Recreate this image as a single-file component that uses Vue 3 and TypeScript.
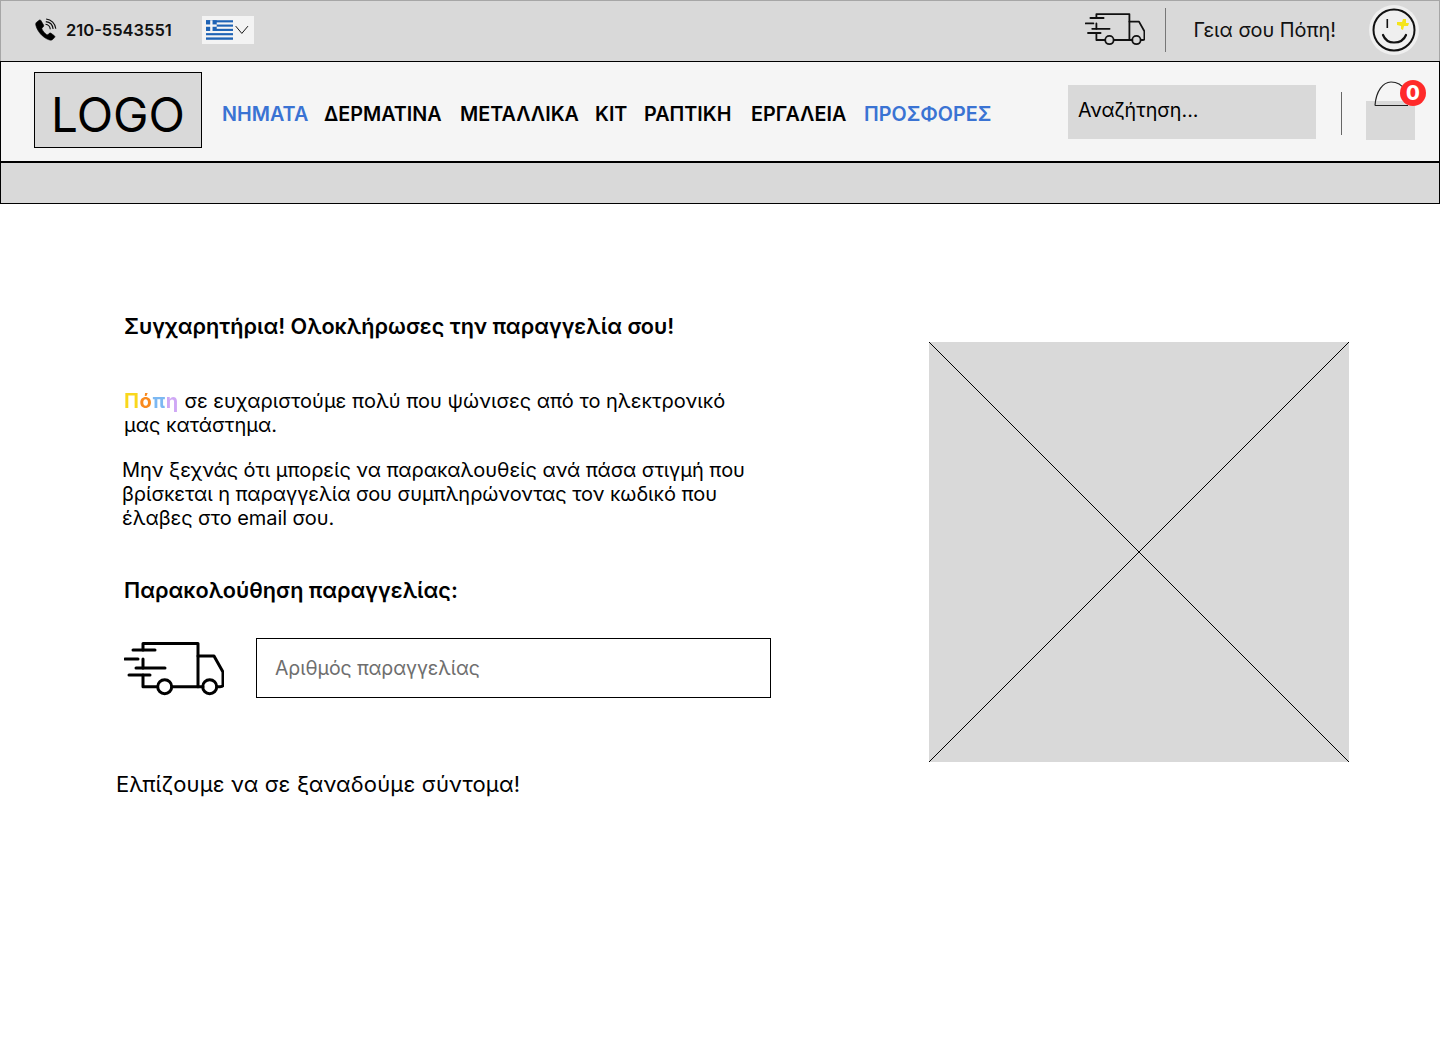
<script setup lang="ts">
const navItems: { label: string; accent?: boolean }[] = [
  { label: 'ΝΗΜΑΤΑ', accent: true },
  { label: 'ΔΕΡΜΑΤΙΝΑ' },
  { label: 'ΜΕΤΑΛΛΙΚΑ' },
  { label: 'ΚΙΤ' },
  { label: 'ΡΑΠΤΙΚΗ' },
  { label: 'ΕΡΓΑΛΕΙΑ' },
  { label: 'ΠΡΟΣΦΟΡΕΣ', accent: true },
]
</script>

<template>
  <div class="page">
    <header>
      <div class="topbar">
        <div class="phone">
          <svg class="phone-icon" width="24" height="24" viewBox="0 0 24 24" fill="none">
            <path d="M5.200 2.200 2.600 4.200C1.600 5 1.500 6.400 2 7.800 3.600 13.600 8.600 19.400 14.400 21.600c1.800.7 3.200.8 4.200-.1l1.900-1.900c.6-.6.5-1.300-.1-1.800l-3.400-2.600c-.6-.4-1.200-.4-1.700.1l-1.300 1.300c-.4.3-.8.3-1.200.1-2-1.300-3.800-3.500-4.900-5.700-.2-.4-.1-.8.2-1.100l1.200-1.100c.5-.5.6-1.100.3-1.700L6.900 2.500c-.4-.7-1.100-.8-1.700-.3Z" fill="#000" stroke="#000" stroke-width=".6"/>
            <path d="M11.500 6.300c2.500.3 4.500 2.300 4.800 4.900M11.800 3.600c4 .4 6.900 3.300 7.300 7.400M12.100 1c5.200.5 9.200 4.500 9.700 9.800" stroke="#0a0a0a" stroke-width="1.100"/>
          </svg>
          <span class="phone-number">210-5543551</span>
        </div>
        <div class="lang">
          <svg width="28" height="20" viewBox="0 0 28 20">
            <rect width="28" height="20" fill="#f5f5f5"/>
            <g fill="#1e63b5">
              <rect y="0" width="28" height="2.200"/>
              <rect x="10" y="4.400" width="18" height="2.200"/>
              <rect x="10" y="8.800" width="18" height="2.200"/>
              <rect y="13.200" width="28" height="2.200"/>
              <rect y="17.600" width="28" height="2.400"/>
              <rect width="11" height="11"/>
            </g>
            <rect x="4.300" width="2.400" height="11" fill="#f5f5f5"/>
            <rect y="4.300" width="11" height="2.400" fill="#f5f5f5"/>
          </svg>
          <svg width="14" height="10" viewBox="0 0 14 10" fill="none">
            <path d="M.7 1 7 8.500 13.300 1" stroke="#111" stroke-width="1"/>
          </svg>
        </div>
        <div class="spacer"></div>
        <svg class="truck-small" width="60" height="34" viewBox="0 0 100 56" fill="none">
          <g stroke="#111" stroke-width="3" stroke-linecap="round" stroke-linejoin="round">
            <path d="M19 8V1.500H74V44.700H48M19 17V26M19 33V44.700H33"/>
            <path d="M74 14H90L99 30V43C99 44.700 98 44.700 96 44.700H93M74 44.700H79"/>
            <path d="M9 8H31M1 17H14M12 26H41M5 33H26"/>
            <circle cx="40.700" cy="44.700" r="7"/>
            <circle cx="85.700" cy="44.700" r="7"/>
          </g>
        </svg>
        <div class="top-divider"></div>
        <span class="greeting">Γεια σου Πόπη!</span>
        <div class="avatar">
          <svg width="44" height="44" viewBox="0 0 44 44" fill="none">
            <circle cx="22" cy="22" r="20.500" stroke="#111" stroke-width="2"/>
            <path d="M15.300 11V20" stroke="#111" stroke-width="1.600"/>
            <path d="M11 27C13 32 17 34.500 22 34.500C28 34.500 32 32 34 27" stroke="#111" stroke-width="2.200" stroke-linecap="round"/>
            <path d="M25 14 30 14 31 11 34 11 34 15 37 15 36 18 32 18 31 22 29 21 29 18 25 17Z" fill="#f5e51b"/>
          </svg>
        </div>
      </div>

      <nav class="navbar">
        <div class="logo">LOGO</div>
        <ul class="nav-links">
          <li v-for="item in navItems" :key="item.label" :class="{ accent: item.accent }">{{ item.label }}</li>
        </ul>
        <div class="search">Αναζήτηση...</div>
        <div class="nav-divider"></div>
        <div class="cart">
          <svg class="cart-handle" width="42" height="26" viewBox="0 0 42 26" fill="none">
            <path d="M1 24.500C2 10 9 1 17 1C24 1 28 4 31 9M1 24.500H34" stroke="#222" stroke-width="1.200"/>
          </svg>
          <div class="cart-box"></div>
          <span class="cart-badge">0</span>
        </div>
      </nav>

      <div class="subbar"></div>
    </header>

    <main class="content">
      <section class="copy">
        <h1 class="heading first">Συγχαρητήρια! Ολοκλήρωσες την παραγγελία σου!</h1>
        <p class="thanks">
          <span class="name">Πόπη</span>
          σε ευχαριστούμε πολύ που ψώνισες από το ηλεκτρονικό μας κατάστημα.
        </p>
        <p class="reminder">
          Μην ξεχνάς ότι μπορείς να παρακαλουθείς ανά πάσα στιγμή που βρίσκεται η παραγγελία σου συμπληρώνοντας τον κωδικό που έλαβες στο email σου.
        </p>
        <h2 class="heading second">Παρακολούθηση παραγγελίας:</h2>
        <div class="tracking">
          <svg width="100" height="56" viewBox="0 0 100 56" fill="none">
            <g stroke="#000" stroke-width="3" stroke-linecap="round" stroke-linejoin="round">
              <path d="M19 8V1.500H74V44.700H48M19 17V26M19 33V44.700H33"/>
              <path d="M74 14H90L99 30V43C99 44.700 98 44.700 96 44.700H93M74 44.700H79"/>
              <path d="M9 8H31M1 17H14M12 26H41M5 33H26"/>
              <circle cx="40.700" cy="44.700" r="7"/>
              <circle cx="85.700" cy="44.700" r="7"/>
            </g>
          </svg>
          <input class="order-input" type="text" placeholder="Αριθμός παραγγελίας" />
        </div>
        <p class="farewell">Ελπίζουμε να σε ξαναδούμε σύντομα!</p>
      </section>
      <svg class="placeholder" width="420" height="420" viewBox="0 0 420 420">
        <rect width="420" height="420" fill="#d9d9d9"/>
        <path d="M0 0 420 420M420 0 0 420" stroke="#000" stroke-width="1"/>
      </svg>
    </main>
  </div>
</template>

<style>
body { margin: 0; background: #fff; }
</style>

<style scoped>
.page {
  width: 1440px;
  height: 1040px;
  overflow: hidden;
  font-family: Inter, "Noto Sans", sans-serif;
  color: #000;
  background: #fff;
}
.topbar {
  box-sizing: border-box;
  height: 61px;
  display: flex;
  align-items: center;
  padding: 0 20px 2px 33px;
  background: #d9d9d9;
  border: 1px solid #a6a6a6;
  border-bottom: none;
}
.phone { display: flex; align-items: center; gap: 8px; }
.phone-icon { display: block; }
.phone-number { font-size: 16.500px; font-weight: 600; color: #111; line-height: 20px; }
.lang {
  box-sizing: border-box;
  width: 52px;
  height: 28px;
  margin-left: 30px;
  padding: 4px 5px 4px 4px;
  display: flex;
  align-items: center;
  gap: 2px;
  background: #f3f3f3;
}
.spacer { flex: 1; }
.truck-small { display: block; margin-right: 20px; }
.top-divider { width: 1px; height: 44px; background: #777; }
.greeting { margin-left: 27px; font-size: 19.900px; color: #111; line-height: 24px; }
.avatar {
  box-sizing: border-box;
  width: 50px;
  height: 50px;
  margin-left: 33px;
  border-radius: 50%;
  background: #efefef;
  display: flex;
  align-items: center;
  justify-content: center;
}
.navbar {
  box-sizing: border-box;
  height: 102px;
  display: flex;
  align-items: center;
  padding: 0 0 0 33px;
  background: #f5f5f5;
  border: 1px solid #000;
  border-bottom-width: 2px;
}
.logo {
  box-sizing: border-box;
  width: 168px;
  height: 76px;
  margin-top: -3px;
  display: flex;
  align-items: center;
  justify-content: center;
  background: #d9d9d9;
  border: 1px solid #000;
  font-size: 47.600px;
  line-height: 58px;
  padding-top: 9px;
}
.nav-links {
  display: flex;
  list-style: none;
  margin: 4px 0 0 20px;
  padding: 0;
  width: 846px;
  font-size: 19.750px;
  font-weight: 600;
  line-height: 24px;
  white-space: nowrap;
}
.nav-links li:nth-child(1) { width: 102px; }
.nav-links li:nth-child(2) { width: 136px; }
.nav-links li:nth-child(3) { width: 135px; }
.nav-links li:nth-child(4) { width: 49px; }
.nav-links li:nth-child(5) { width: 107px; }
.nav-links li:nth-child(6) { width: 113px; }
.accent { color: #3a73d3; }
.search {
  box-sizing: border-box;
  width: 248px;
  height: 54px;
  padding: 13px 10px;
  background: #d9d9d9;
  font-size: 19.700px;
  line-height: 24px;
}
.nav-divider { width: 1px; height: 43px; margin-left: 25px; margin-top: 4px; background: #666; }
.cart {
  position: relative;
  width: 50px;
  height: 60px;
  margin-left: 24px;
  margin-top: -2px;
}
.cart-box {
  position: absolute;
  left: 0;
  bottom: 1px;
  width: 49px;
  height: 39px;
  background: #d9d9d9;
}
.cart-handle { position: absolute; left: 8px; top: 0; z-index: 1; }
.cart-badge {
  position: absolute;
  left: 34px;
  top: -1px;
  z-index: 2;
  width: 26px;
  height: 26px;
  border-radius: 50%;
  background: #ff2a2a;
  color: #fff;
  font-size: 20px;
  font-weight: 800;
  line-height: 26px;
  text-align: center;
}
.subbar {
  box-sizing: border-box;
  height: 41px;
  background: #d9d9d9;
  border: 1px solid #000;
  border-top: none;
}
.content {
  display: flex;
  align-items: flex-start;
  padding-left: 116px;
}
.copy { width: 813px; flex: none; }
.heading {
  margin: 0;
  padding-left: 8px;
  font-size: 21.650px;
  font-weight: 600;
  line-height: 27px;
  white-space: nowrap;
}
.first { margin-top: 109px; }
.second { margin-top: 47px; }
p { margin: 0; font-size: 20px; line-height: 24px; }
.thanks { width: 612px; margin: 49px 0 0 8px; }
.name {
  font-weight: 700;
  letter-spacing: .6px;
  color: transparent;
  background: linear-gradient(90deg, #f9d71c 0 26%, #f98a1e 26% 50%, #7cb8f2 50% 74%, #cfa8f5 74% 100%);
  -webkit-background-clip: text;
  background-clip: text;
}
.reminder { width: 630px; margin: 21px 0 0 6px; letter-spacing: -.06px; }
.tracking {
  display: flex;
  align-items: center;
  gap: 32px;
  margin: 34px 0 0 8px;
}
.tracking svg { display: block; margin-top: 4px; }
.order-input {
  box-sizing: border-box;
  width: 515px;
  height: 60px;
  padding: 0 18px;
  border: 1px solid #000;
  background: #fff;
  font: 19.500px/24px Inter, "Noto Sans", sans-serif;
  letter-spacing: -.08px;
  outline: none;
}
.order-input::placeholder { color: #6e6e6e; opacity: 1; }
.farewell { margin-top: 73px; font-size: 22px; line-height: 27px; letter-spacing: .15px; white-space: nowrap; }
.placeholder { display: block; flex: none; margin-top: 138px; }
</style>
